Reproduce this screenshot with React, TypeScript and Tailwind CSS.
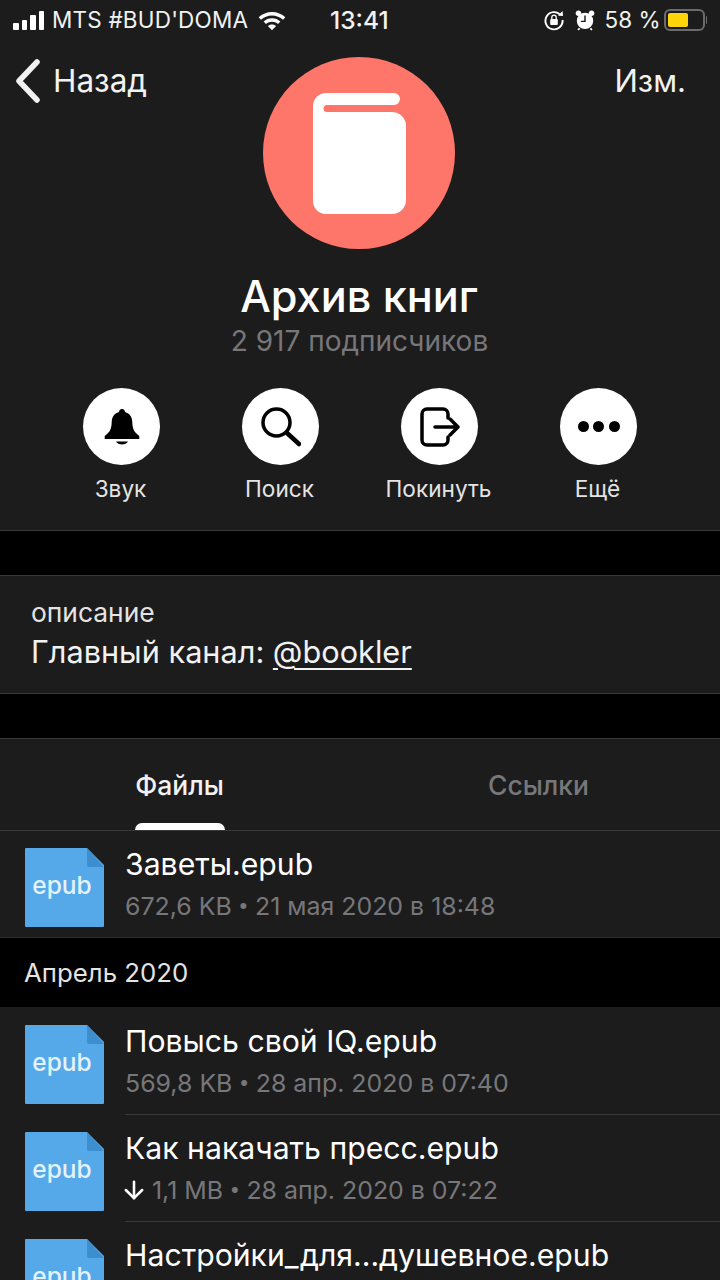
import { ArrowDown } from 'lucide-react';
import type { ReactNode } from 'react';

function StatusBar() {
  return (
    <div className="relative flex h-[40px] shrink-0 items-center pr-[13px] pl-[13px] text-[22.500px] leading-[28px] text-[#f2f2f2]">
      <div className="flex items-end gap-[3px]">
        <span className="h-[7px] w-[5.500px] rounded-[1px] bg-white" />
        <span className="h-[10px] w-[5.500px] rounded-[1px] bg-white" />
        <span className="h-[15px] w-[5.500px] rounded-[1px] bg-white" />
        <span className="h-[19px] w-[5.500px] rounded-[1px] bg-white" />
      </div>
      <span className="ml-[8px] tracking-[0.2px]">MTS #BUD'DOMA</span>
      <svg className="ml-[9px]" width="30" height="22" viewBox="0 0 30 22" fill="white">
        <path d="M15 3C9.8 3 5.2 5 1.6 8.3L4 10.8C7 8 10.8 6.4 15 6.4s8 1.6 11 4.4l2.4-2.5C24.8 5 20.2 3 15 3z" />
        <path d="M15 9.3c-3.2 0-6.2 1.2-8.4 3.3L9 15c1.6-1.4 3.7-2.3 6-2.3s4.4.9 6 2.3l2.4-2.4c-2.2-2.1-5.2-3.3-8.4-3.3z" />
        <path d="M15 15.5c-1.6 0-3 .6-4.1 1.6L15 21.3l4.1-4.2c-1.1-1-2.5-1.6-4.1-1.6z" />
      </svg>
      <span className="absolute left-[330px] text-[24.500px] font-medium">13:41</span>
      <div className="ml-auto flex items-center">
        <svg width="22" height="22" viewBox="0 0 22 22" fill="none">
          <path d="M17.6 6.2A8.6 8.6 0 1 0 19.6 11" stroke="white" strokeWidth="1.9" />
          <path d="M15 6.6l5 .4-.4-5z" fill="white" />
          <rect x="7.2" y="10" width="7.6" height="6" rx="1" fill="white" />
          <path d="M8.8 10V8.4a2.2 2.2 0 0 1 4.4 0V10" stroke="white" strokeWidth="1.3" />
        </svg>
        <svg className="ml-[10px]" width="20" height="22" viewBox="0 0 22 24" fill="none">
          <circle cx="11" cy="13" r="9" fill="white" />
          <circle cx="3.8" cy="4.6" r="3" fill="white" />
          <circle cx="18.2" cy="4.6" r="3" fill="white" />
          <path d="M11 7v6.5H6.5" stroke="#1c1c1d" strokeWidth="1.6" />
          <path d="M5 21l-1.500 2M17 21l1.500 2" stroke="white" strokeWidth="2" />
        </svg>
        <span className="ml-[9px]">58 %</span>
        <div className="ml-[3px] flex items-center">
          <div className="h-[22px] w-[41px] rounded-[6px] border-2 border-[#6b6b6d] p-[2px]">
            <div className="h-full w-[20px] rounded-[2px] bg-[#ffd60a]" />
          </div>
          <span className="ml-[1px] h-[8px] w-[1.5px] rounded-r-sm bg-[#6b6b6d]" />
        </div>
      </div>
    </div>
  );
}

function ActionButton({ label, children }: { label: string; children: ReactNode }) {
  return (
    <div className="flex w-[159px] flex-col items-center">
      <div className="flex h-[77px] w-[77px] items-center justify-center rounded-full bg-white">{children}</div>
      <span className="mt-[10px] mr-[2px] text-[22.600px] leading-[28px] text-[#e4e4e4]">{label}</span>
    </div>
  );
}

function ProfileHeader() {
  return (
    <div className="flex h-[491px] shrink-0 flex-col items-center border-b border-[#38383a]">
      <div className="flex h-[82px] w-full items-center justify-between pr-[34px] pl-[15px] text-[#f2f2f2]">
        <div className="flex items-center">
          <svg width="26" height="44" viewBox="0 0 26 44" fill="none">
            <path d="M22 3L4 22l18 19" stroke="#f2f2f2" strokeWidth="5.500" strokeLinecap="round" strokeLinejoin="round" />
          </svg>
          <span className="ml-[12px] text-[31.500px] leading-[36px]">Назад</span>
        </div>
        <span className="text-[31px] leading-[36px]">Изм.</span>
      </div>
      <div className="-mt-[65px] mr-[2px] flex h-[192px] w-[192px] items-center justify-center rounded-full bg-[#fe766a]">
        <svg width="96" height="122" viewBox="-1 0 96 122" fill="white">
          <path d="M14 1h68a6 6 0 0 1 0 12H15a3.500 3.500 0 0 0 0 7h65a14 14 0 0 1 14 14v74a14 14 0 0 1-14 14H14A13 13 0 0 1 1 109V14A13 13 0 0 1 14 1z" />
        </svg>
      </div>
      <h1 className="mt-[21px] mr-[2px] text-[43.200px] leading-[52px] font-medium text-white">Архив книг</h1>
      <p className="mt-[1px] mr-[1px] text-[28px] leading-[36px] text-[#77777a]">2 917 подписчиков</p>
      <div className="mt-[29px] flex w-[640px] justify-center">
        <ActionButton label="Звук">
          <svg width="38" height="38" viewBox="0 0 38 38" fill="black">
            <path d="M19 1c-2 0-3 1.500-3 3-5 1.500-7 5-7.300 10-.2 7-1.700 10-7 14v3h34.600v-3c-5.300-4-6.800-7-7-14-.3-5-2.300-8.500-7.300-10 0-1.500-1-3-3-3z" />
            <path d="M13 33.500h12c-1 2-3.500 3-6 3s-5-1-6-3z" />
          </svg>
        </ActionButton>
        <ActionButton label="Поиск">
          <svg width="40" height="40" viewBox="0 0 40 40" fill="none" stroke="black" strokeWidth="3.500">
            <circle cx="15.500" cy="15.500" r="13.500" />
            <path d="M26 26l12 11" strokeWidth="4.500" strokeLinecap="round" />
          </svg>
        </ActionButton>
        <ActionButton label="Покинуть">
          <svg width="40" height="40" viewBox="0 0 40 40" fill="none" stroke="black" strokeWidth="3.500" strokeLinecap="round" strokeLinejoin="round">
            <path d="M28 11V7a5 5 0 0 0-5-5H7a5 5 0 0 0-5 5v26a5 5 0 0 0 5 5h16a5 5 0 0 0 5-5v-3" />
            <path d="M15 20h23M30 12l8 8-8 8" />
          </svg>
        </ActionButton>
        <ActionButton label="Ещё">
          <div className="flex gap-[4.500px]">
            <span className="h-[11px] w-[11px] rounded-full bg-black" />
            <span className="h-[11px] w-[11px] rounded-full bg-black" />
            <span className="h-[11px] w-[11px] rounded-full bg-black" />
          </div>
        </ActionButton>
      </div>
    </div>
  );
}

function FileIcon() {
  return (
    <div className="relative h-[79px] w-[79px] shrink-0">
      <svg className="absolute inset-0" width="79" height="79" viewBox="0 0 79 79">
        <path d="M1 0h61l17 17v61a1 1 0 0 1-1 1H1a1 1 0 0 1-1-1V1a1 1 0 0 1 1-1z" fill="#55a9e8" />
        <path d="M62 0l17 19H64a2 2 0 0 1-2-2z" fill="#3c8ecf" />
      </svg>
      <span className="absolute inset-x-0 top-[23px] pr-[5px] text-center text-[24.500px] leading-[28px] font-medium text-[#e4f2fc]">epub</span>
    </div>
  );
}

interface FileRowProps {
  name: string;
  size?: string;
  date?: string;
  downloaded?: boolean;
  divider?: boolean;
  first?: boolean;
}

function FileRow({ name, size, date, downloaded, divider, first }: FileRowProps) {
  return (
    <div className={`flex shrink-0 pl-[25px] ${first ? 'h-[106px] pt-[17px]' : 'h-[107px] pt-[18px]'}`}>
      <FileIcon />
      <div className={`ml-[21px] flex-1 ${divider ? '-mb-px border-b border-[#38383a]' : ''}`}>
        <p className="-mt-[3px] text-[30.200px] leading-[38px] text-white">{name}</p>
        {size && (
          <p className="mt-[7px] flex items-center whitespace-pre text-[24.900px] leading-[32px] text-[#77777a]">
            {downloaded && <ArrowDown size={28} strokeWidth={2.2} color="white" className="mr-[4px] -ml-[5px]" />}
            {size}
            <span className="mx-[1px] text-[19px]"> • </span>
            {date}
          </p>
        )}
      </div>
    </div>
  );
}

export default function App() {
  return (
    <div className="flex h-[1280px] w-[720px] flex-col overflow-hidden bg-[#1c1c1d] font-['Inter',sans-serif]">
      <StatusBar />
      <ProfileHeader />
      <div className="h-[44px] shrink-0 bg-black" />
      <div className="h-[119px] shrink-0 border-y border-[#38383a] pt-[21px] pl-[31px]">
        <p className="text-[26.400px] leading-[30px] text-[#e4e4e4]">описание</p>
        <p className="mt-[6px] text-[30.700px] leading-[38px] text-[#f2f2f2]">
          Главный канал: <span className="underline decoration-[1.5px] underline-offset-[5px]">@bookler</span>
        </p>
      </div>
      <div className="h-[44px] shrink-0 bg-black" />
      <div className="flex h-[93px] shrink-0 border-y border-[#38383a] text-[26.500px] font-medium">
        <div className="relative w-[359px] pt-[30px] text-center leading-[32px] text-[#f2f2f2]">
          Файлы
          <span className="absolute bottom-0 left-[135px] h-[7px] w-[90px] rounded-t-[8px] bg-white" />
        </div>
        <div className="w-[359px] pt-[30px] text-center leading-[32px] text-[#77777a]">Ссылки</div>
      </div>
      <FileRow name="Заветы.epub" size="672,6 KB" date="21 мая 2020 в 18:48" first />
      <div className="flex h-[70px] shrink-0 items-center border-t border-[#2c2c2e] bg-black pl-[24px] text-[25.800px] leading-none text-[#e4e4e4]">
        Апрель 2020
      </div>
      <FileRow name="Повысь свой IQ.epub" size="569,8 KB" date="28 апр. 2020 в 07:40" divider />
      <FileRow name="Как накачать пресс.epub" size="1,1 MB" date="28 апр. 2020 в 07:22" downloaded divider />
      <FileRow name="Настройки_для...душевное.epub" />
    </div>
  );
}
